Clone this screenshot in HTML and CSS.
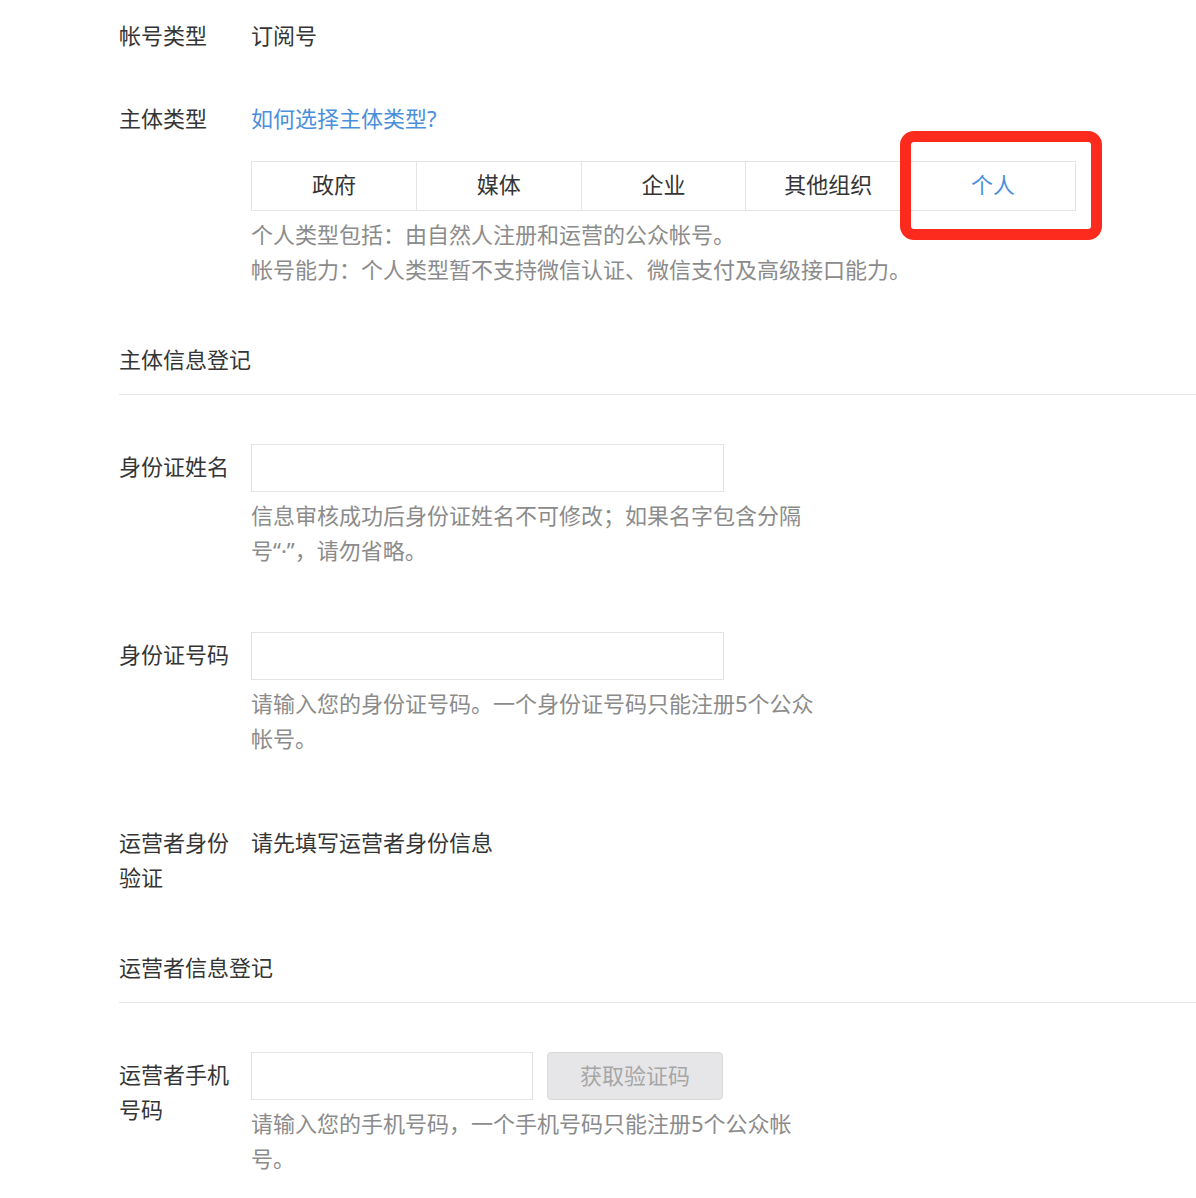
FILE: index.html
```html
<!DOCTYPE html>
<html lang="zh-CN">
<head>
  <meta charset="UTF-8">
  <title>公众号注册 - 信息登记</title>
  <link rel="stylesheet" href="styles.css">
</head>
<body>
  <div id="form">

    <div class="row first">
      <div class="label">帐号类型</div>
      <div class="value">订阅号</div>
    </div>

    <div class="row type-row">
      <div class="label">主体类型</div>
      <div class="value">
        <a class="link" href="#">如何选择主体类型?</a>
        <div class="tabs">
          <div class="tab">政府</div>
          <div class="tab">媒体</div>
          <div class="tab">企业</div>
          <div class="tab">其他组织</div>
          <div class="tab active">个人</div>
          <!-- 红框标注 -->
          <div class="mark"></div>
        </div>
        <p class="tip tabs-tip">个人类型包括：由自然人注册和运营的公众帐号。<br>帐号能力：个人类型暂不支持微信认证、微信支付及高级接口能力。</p>
      </div>
    </div>

    <div class="section">主体信息登记</div>

    <div class="row input-row after-section">
      <div class="label">身份证姓名</div>
      <div class="value">
        <input type="text" class="field">
        <p class="tip">信息审核成功后身份证姓名不可修改；如果名字包含分隔号“·”，请勿省略。</p>
      </div>
    </div>

    <div class="row input-row gap-big">
      <div class="label">身份证号码</div>
      <div class="value">
        <input type="text" class="field">
        <p class="tip">请输入您的身份证号码。一个身份证号码只能注册5个公众帐号。</p>
      </div>
    </div>

    <div class="row verify-row">
      <div class="label">运营者身份验证</div>
      <div class="value">请先填写运营者身份信息</div>
    </div>

    <div class="section">运营者信息登记</div>

    <div class="row input-row after-section">
      <div class="label">运营者手机号码</div>
      <div class="value">
        <div class="phone">
          <input type="text" class="field short">
          <div class="btn">获取验证码</div>
        </div>
        <p class="tip">请输入您的手机号码，一个手机号码只能注册5个公众帐号。</p>
      </div>
    </div>

  </div>
</body>
</html>
```

FILE: styles.css
```css
body{
  margin: 0px;
  padding: 0px;
  background: #ffffff;
  font-family: "Noto Sans", "Noto Sans CJK SC", sans-serif;
  font-size: 22px;
  line-height: 35px;
  color: #353535;
}

#form{
  padding: 18px 0px 0px 119px;
  overflow: hidden;
}

.row{
  display: flex;
}
.label{
  width: 110px;
  margin-right: 22px;
  flex-shrink: 0;
}
.value{
  flex: 1;
  min-width: 0;
}

.type-row{
  margin-top: 47.5px;
}
.link{
  color: #4a8fdc;
  text-decoration: none;
}

.tabs{
  position: relative;
  display: flex;
  width: 823px;
  margin-top: 25px;
  border: 1px solid #e4e4e4;
}
.tab{
  flex: 1;
  height: 48px;
  line-height: 44px;
  padding-bottom: 4px;
  box-sizing: border-box;
  text-align: center;
  border-left: 1px solid #e4e4e4;
}
.tab:first-child{
  border-left: none;
}
.tab.active{
  color: #4a8fdc;
}
.mark{
  position: absolute;
  left: 648px;
  top: -31px;
  width: 180px;
  height: 87px;
  border: 11px solid #fd2a1e;
  border-radius: 14px;
  pointer-events: none;
}

.tip{
  margin: 6.5px 0px 0px 0px;
  color: #8b8b8b;
  max-width: 566px;
}
.tabs-tip{
  max-width: none;
}

.section{
  margin-top: 55px;
  padding-bottom: 17px;
  border-bottom: 1px solid #e7e7e7;
  margin-right: -20px;
}

.after-section{
  margin-top: 48.5px;
}
.gap-big{
  margin-top: 63.5px;
}
.input-row .label{
  padding-top: 5.5px;
}

.field{
  display: block;
  box-sizing: border-box;
  width: 473px;
  height: 48px;
  margin: 0px;
  border: 1px solid #e2e2e2;
  border-radius: 0px;
  outline: none;
  padding: 0px 12px;
  font-family: inherit;
  font-size: inherit;
}
.field.short{
  width: 282px;
}

.verify-row{
  margin-top: 69px;
}

.phone{
  display: flex;
  gap: 14px;
}
.btn{
  box-sizing: border-box;
  width: 176px;
  height: 48px;
  line-height: 44px;
  text-align: center;
  background: #e6e6e9;
  border: 1px solid #dadada;
  border-radius: 4px;
  color: #a6a6a6;
}
```
